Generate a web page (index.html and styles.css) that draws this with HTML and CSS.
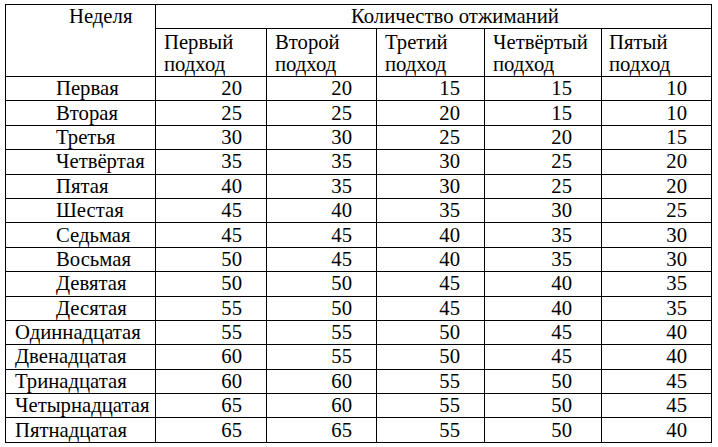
FILE: index.html
```html
<!DOCTYPE html>
<html lang="ru">
<head>
<meta charset="utf-8">
<title>Количество отжиманий</title>
<link rel="stylesheet" href="styles.css">
</head>
<body>
<table class="grid">
  <colgroup>
    <col class="c-week">
    <col class="c1">
    <col class="c2">
    <col class="c3">
    <col class="c4">
    <col class="c5">
  </colgroup>
  <thead>
    <tr class="h1">
      <th class="week-head" rowspan="2">Неделя</th>
      <th class="group-head" colspan="5">Количество отжиманий</th>
    </tr>
    <tr class="h2">
      <th class="sub">Первый<br>подход</th>
      <th class="sub">Второй<br>подход</th>
      <th class="sub">Третий<br>подход</th>
      <th class="sub tight">Четвёртый<br>подход</th>
      <th class="sub narrow">Пятый<br>подход</th>
    </tr>
  </thead>
  <tbody>
    <tr><td class="wk ind">Первая</td><td>20</td><td>20</td><td>15</td><td class="n4">15</td><td>10</td></tr>
    <tr><td class="wk ind">Вторая</td><td>25</td><td>25</td><td>20</td><td class="n4">15</td><td>10</td></tr>
    <tr><td class="wk ind">Третья</td><td>30</td><td>30</td><td>25</td><td class="n4">20</td><td>15</td></tr>
    <tr><td class="wk ind">Четвёртая</td><td>35</td><td>35</td><td>30</td><td class="n4">25</td><td>20</td></tr>
    <tr><td class="wk ind">Пятая</td><td>40</td><td>35</td><td>30</td><td class="n4">25</td><td>20</td></tr>
    <tr><td class="wk ind">Шестая</td><td>45</td><td>40</td><td>35</td><td class="n4">30</td><td>25</td></tr>
    <tr><td class="wk ind">Седьмая</td><td>45</td><td>45</td><td>40</td><td class="n4">35</td><td>30</td></tr>
    <tr><td class="wk ind">Восьмая</td><td>50</td><td>45</td><td>40</td><td class="n4">35</td><td>30</td></tr>
    <tr><td class="wk ind">Девятая</td><td>50</td><td>50</td><td>45</td><td class="n4">40</td><td>35</td></tr>
    <tr><td class="wk ind">Десятая</td><td>55</td><td>50</td><td>45</td><td class="n4">40</td><td>35</td></tr>
    <tr><td class="wk">Одиннадцатая</td><td>55</td><td>55</td><td>50</td><td class="n4">45</td><td>40</td></tr>
    <tr><td class="wk">Двенадцатая</td><td>60</td><td>55</td><td>50</td><td class="n4">45</td><td>40</td></tr>
    <tr><td class="wk">Тринадцатая</td><td>60</td><td>60</td><td>55</td><td class="n4">50</td><td>45</td></tr>
    <tr><td class="wk">Четырнадцатая</td><td>65</td><td>60</td><td>55</td><td class="n4">50</td><td>45</td></tr>
    <tr><td class="wk">Пятнадцатая</td><td>65</td><td>65</td><td>55</td><td class="n4">50</td><td>40</td></tr>
  </tbody>
</table>
</body>
</html>
```

FILE: styles.css
```css
html, body {
  margin: 0;
  padding: 0;
  background: #ffffff;
}

body {
  padding: 4px 0 0 5px;
  font-family: "Times New Roman", "Liberation Serif", Tinos, "Noto Serif", "DejaVu Serif", serif;
  font-size: 20.7px;
  color: #000000;
}

.grid {
  border-collapse: collapse;
  table-layout: fixed;
  width: 706px;
  font: inherit;
}

.c-week { width: 150px; }
.c1 { width: 111px; }
.c2 { width: 110px; }
.c3 { width: 108px; }
.c4 { width: 117px; }
.c5 { width: 110px; }

.grid th,
.grid td {
  border: 1px solid #000000;
  padding: 0;
  font: inherit;
  white-space: nowrap;
  overflow: hidden;
}

.h1 th {
  height: 23px;
  line-height: 23px;
  vertical-align: middle;
}

.week-head {
  vertical-align: top !important;
  text-align: left;
  padding-left: 63px !important;
}

.group-head {
  text-align: left;
  padding-left: 195px !important;
}

.h2 th {
  height: 45px;
  line-height: 22px;
  vertical-align: top;
  text-align: left;
  padding: 2px 0 0 8px;
}

.h2 .tight { padding-left: 8px; }
.h2 .narrow { padding-left: 7px; }

.grid tbody tr {
  height: 24.4px;
}

.grid tbody td {
  line-height: 23px;
  vertical-align: middle;
  text-align: right;
  padding-right: 24px;
}

.grid tbody td.n4 {
  padding-right: 29px;
}

.grid tbody td.wk {
  text-align: left;
  padding-right: 0;
  padding-left: 9px;
}

.grid tbody td.wk.ind {
  padding-left: 50px;
}
```
